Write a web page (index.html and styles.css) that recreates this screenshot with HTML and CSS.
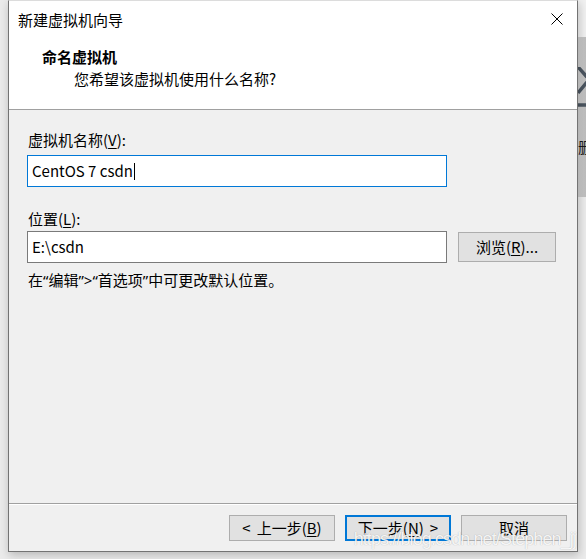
FILE: index.html
```html
<!DOCTYPE html>
<html lang="zh-CN">
<head>
<meta charset="utf-8">
<title>新建虚拟机向导</title>
<link rel="stylesheet" href="styles.css">
</head>
<body>
<div class="desk">
  <div class="gutter"></div>
  <div class="dialog">
    <div class="head">
      <div class="titlebar">
        <span class="title">新建虚拟机向导</span>
        <svg class="close" width="12" height="12" viewBox="0 0 12 12"><path d="M0.5 0.5 L11.5 11.5 M11.5 0.5 L0.5 11.5" stroke="#000" stroke-width="1" fill="none"/></svg>
      </div>
      <div class="heading">命名虚拟机</div>
      <div class="sub">您希望该虚拟机使用什么名称?</div>
    </div>
    <div class="body">
      <div class="label first">虚拟机名称(<u>V</u>):</div>
      <div class="input focus"><span>CentOS 7 csdn</span><span class="caret"></span></div>
      <div class="label second">位置(<u>L</u>):</div>
      <div class="row">
        <div class="input">E:\csdn</div>
        <div class="btn browse">浏览(<u>R</u>)...</div>
      </div>
      <div class="hint">在<span class="q">“</span>编辑<span class="q">”&gt;“</span>首选项<span class="q">”</span>中可更改默认位置。</div>
    </div>
    <div class="footer">
      <div class="btn"><span class="arrow-l">&lt;</span>上一步(<u>B</u>)</div>
      <div class="btn default">下一步(<u>N</u>)<span class="arrow-r">&gt;</span></div>
      <div class="btn">取消</div>
    </div>
    <div class="watermark">https://blog.csdn.net/Stephen_jj</div>
  </div>
  <div class="side">
    <div class="side-top"></div>
    <div class="side-mid">
      <svg class="side-icon" width="8" height="44" viewBox="0 0 8 44"><path d="M0 0 L9 10 M9 15 L0 26 M0 38 H9" stroke="#4b5560" stroke-width="3.5" fill="none"/></svg>
      <div class="side-text">删除</div>
    </div>
    <div class="side-bottom"></div>
  </div>
</div>
</body>
</html>
```

FILE: styles.css
```css
html, body {
  margin: 0;
  padding: 0;
}
body {
  width: 586px;
  height: 559px;
  overflow: hidden;
  background: #ebebeb;
  font-family: "Noto Sans CJK SC", "Noto Sans", sans-serif;
  font-size: 15px;
  color: #000;
}
.desk {
  display: flex;
  align-items: flex-start;
  height: 559px;
}
.gutter {
  width: 8px;
  flex: none;
}
.dialog {
  position: relative;
  z-index: 2;
  width: 568px;
  height: 550px;
  flex: none;
  border: 1px solid #737373;
  border-top: 1px solid #dcdcdc;
  background: #f0f0f0;
  display: flex;
  flex-direction: column;
  box-shadow: 1px 3px 9px rgba(0, 0, 0, 0.22);
}
.head {
  background: #fff;
  height: 108px;
  border-bottom: 1px solid #a0a0a0;
  flex: none;
}
.titlebar {
  display: flex;
  align-items: center;
  justify-content: space-between;
  height: 20px;
  padding: 9px 14px 0 9px;
  line-height: 20px;
}
.close {
  display: block;
  margin-top: -2px;
}
.heading {
  font-weight: bold;
  line-height: 20px;
  margin-top: 17px;
  padding-left: 33px;
}
.sub {
  line-height: 20px;
  margin-top: 2px;
  padding-left: 65px;
}
.body {
  flex: 1;
  padding: 20px 0 0 18px;
}
.label {
  line-height: 20px;
  padding-left: 1px;
}
.label.second {
  margin-top: 22px;
}
.input {
  box-sizing: border-box;
  width: 420px;
  height: 32px;
  border: 1px solid #7a7a7a;
  background: #fff;
  padding-left: 4px;
  line-height: 28px;
  display: flex;
  align-items: center;
}
.input.focus {
  border-color: #0078d7;
  margin-top: 5px;
}
.caret {
  display: inline-block;
  width: 1px;
  height: 17px;
  background: #000;
  margin-left: 1px;
}
.row {
  display: flex;
  align-items: center;
  margin-top: 2px;
}
.btn {
  box-sizing: border-box;
  width: 106px;
  height: 26px;
  border: 1px solid #adadad;
  background: #e1e1e1;
  display: flex;
  align-items: center;
  justify-content: center;
  line-height: 20px;
  white-space: nowrap;
}
.arrow-l {
  margin-right: 6px;
}
.arrow-r {
  margin-left: 6px;
}
.btn.browse {
  width: 98px;
  height: 30px;
  margin-left: 11px;
}
.btn.default {
  border: 2px solid #0078d7;
}
u {
  text-decoration: underline;
  text-underline-offset: 2px;
}
.hint {
  line-height: 20px;
  margin-top: 7px;
  padding-left: 1px;
}
.q {
  font-family: "Noto Sans", sans-serif;
}
.footer {
  flex: none;
  height: 47px;
  border-top: 1px solid #a0a0a0;
  box-shadow: inset 0 1px 0 #ffffff;
  box-sizing: content-box;
  display: flex;
  justify-content: flex-end;
  align-items: flex-start;
  gap: 10px;
  padding: 0 10px 0 0;
}
.footer .btn {
  margin-top: 11px;
}
.watermark {
  position: absolute;
  right: 1px;
  bottom: 2px;
  font-family: "Liberation Sans", Arial, sans-serif;
  font-size: 18px;
  letter-spacing: -0.9px;
  line-height: 20px;
  color: rgba(255, 255, 255, 0.9);
  text-shadow: 0 0 1px rgba(0, 0, 0, 0.3);
  white-space: nowrap;
}
.side {
  width: 8px;
  flex: none;
  display: flex;
  flex-direction: column;
  height: 559px;
  overflow: hidden;
}
.side-top {
  height: 37px;
  background: #f1f1f1;
}
.side-mid {
  height: 160px;
  background: linear-gradient(90deg, #d0d0d0, #bdbdbd);
  position: relative;
}
.side-icon {
  position: absolute;
  left: 0;
  top: 30px;
}
.side-text {
  position: absolute;
  left: 0;
  top: 100px;
  font-size: 15px;
  line-height: 20px;
  white-space: nowrap;
  color: #1a1a1a;
}
.side-bottom {
  flex: 1;
  background: #ececec;
}
```
